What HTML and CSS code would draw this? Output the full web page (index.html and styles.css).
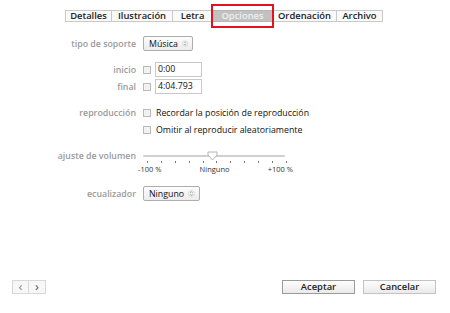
FILE: index.html
```html
<!DOCTYPE html>
<html>
<head>
    <title>Opciones</title>
    <link rel="stylesheet" href="styles.css">
</head>
<body>
    <div class="tabs">
        <span class="tab">Detalles</span>
        <span class="tab">Ilustración</span>
        <span class="tab">Letra</span>
        <span class="tab active">Opciones</span>
        <span class="tab">Ordenación</span>
        <span class="tab">Archivo</span>
    </div>

    <div class="form">
        <div class="row row-media">
            <span class="label">tipo de soporte</span>
            <span class="select">Música
                <svg class="updown" width="9" height="9" viewBox="0 0 9 9"><circle cx="4.5" cy="4.5" r="4" fill="none" stroke="#d0d0d0"/><path d="M2.8 3.6 L4.5 2.2 L6.2 3.6 M2.8 5.4 L4.5 6.8 L6.2 5.4" fill="none" stroke="#888" stroke-width="0.9"/></svg>
            </span>
        </div>

        <div class="row row-start">
            <span class="label">inicio</span>
            <span class="check"></span>
            <span class="field">0:00</span>
        </div>
        <div class="row row-end">
            <span class="label">final</span>
            <span class="check"></span>
            <span class="field">4:04.793</span>
        </div>

        <div class="row row-play">
            <span class="label">reproducción</span>
            <span class="check"></span>
            <span class="text">Recordar la posición de reproducción</span>
        </div>
        <div class="row row-skip">
            <span class="label"></span>
            <span class="check"></span>
            <span class="text">Omitir al reproducir aleatoriamente</span>
        </div>

        <div class="row row-volume">
            <span class="label">ajuste de volumen</span>
            <div class="slider">
                <div class="track">
                    <svg class="thumb" width="11" height="10" viewBox="0 0 11 10"><path d="M1 1 H10 V4 L5.5 9 L1 4 Z" fill="#fff" stroke="#b4b4b4"/></svg>
                </div>
                <div class="ticks">
                    <i></i><i></i><i></i><i></i><i></i><i></i><i></i><i></i><i></i><i></i><i></i>
                </div>
                <div class="scale">
                    <span>-100 %</span>
                    <span>Ninguno</span>
                    <span>+100 %</span>
                </div>
            </div>
        </div>

        <div class="row row-eq">
            <span class="label">ecualizador</span>
            <span class="select">Ninguno
                <svg class="updown" width="9" height="9" viewBox="0 0 9 9"><circle cx="4.5" cy="4.5" r="4" fill="none" stroke="#d0d0d0"/><path d="M2.8 3.6 L4.5 2.2 L6.2 3.6 M2.8 5.4 L4.5 6.8 L6.2 5.4" fill="none" stroke="#888" stroke-width="0.9"/></svg>
            </span>
        </div>
    </div>

    <div class="footer">
        <div class="nav">
            <span class="navbtn">&lsaquo;</span>
            <span class="navbtn">&rsaquo;</span>
        </div>
        <div class="actions">
            <span class="button default">Aceptar</span>
            <span class="button">Cancelar</span>
        </div>
    </div>
</body>
</html>
```

FILE: styles.css
```css
body {
    margin: 0;
    width: 450px;
    height: 313px;
    background: #fff;
    font-family: "Open Sans", "Noto Sans", sans-serif;
    font-size: 8.8px;
    color: #111;
    display: flex;
    flex-direction: column;
}
.tabs {
    display: flex;
    margin: 10px 0 0 65px;
    height: 12px;
}
.tab {
    box-sizing: border-box;
    height: 12px;
    line-height: 10px;
    border: 1px solid #c9c9c9;
    border-left: none;
    background: #fafafa;
    font-weight: 600;
    font-size: 9.4px;
    color: #222;
    text-align: center;
}
.tab:first-child {
    border-left: 1px solid #c9c9c9;
    width: 47px;
}
.tab:nth-child(2) { width: 61px; }
.tab:nth-child(3) { width: 40px; }
.tab:nth-child(5) { width: 64px; }
.tab:nth-child(6) { width: 46px; }
.tab.active {
    position: relative;
    width: 60px;
    background: #c2c2c2;
    color: #eee;
    border-color: #b5b5b5;
}
.tab.active::after {
    content: "";
    position: absolute;
    left: -2px;
    right: -2px;
    top: -7px;
    bottom: -7px;
    border: 2px solid #e0141e;
}
.form {
    margin-top: 14px;
}
.row {
    display: flex;
    align-items: center;
}
.label {
    width: 136px;
    flex: none;
    text-align: right;
    color: #9a9a9a;
    font-weight: 600;
    margin-right: 7px;
}
.select {
    box-sizing: border-box;
    display: inline-flex;
    align-items: center;
    justify-content: space-between;
    gap: 4px;
    height: 15px;
    padding: 0 4px 0 5px;
    border: 1px solid #adadad;
    border-radius: 2px;
    background: linear-gradient(#fdfdfd, #ececec);
    color: #111;
}
.row-media .select { width: 50px; }
.row-eq .select { width: 57px; }
.check {
    box-sizing: border-box;
    width: 8px;
    height: 8px;
    border: 1px solid #b9b9b9;
    background: #f2f2f2;
    flex: none;
    margin-right: 4px;
}
.field {
    box-sizing: border-box;
    width: 47px;
    height: 15px;
    line-height: 13px;
    padding-left: 2px;
    border: 1px solid #c9c9c9;
    color: #111;
}
.row-start { margin-top: 11px; }
.row-end { margin-top: 2px; }
.row-play { margin-top: 13px; }
.row-skip { margin-top: 5px; }
.text { margin-left: 1px; }
.row-volume {
    margin-top: 13px;
    align-items: flex-start;
}
.row-volume .label { line-height: 14px; }
.slider {
    width: 155px;
    margin-left: -5px;
}
.track {
    position: relative;
    margin: 6px 8px 0 5px;
    height: 2px;
    background: #cfcfcf;
    border-radius: 1px;
}
.thumb {
    position: absolute;
    left: 64px;
    top: -4px;
}
.ticks {
    display: flex;
    justify-content: space-between;
    margin: 4px 6px 0 9px;
    height: 2px;
}
.ticks i {
    width: 1px;
    height: 2px;
    background: #777;
}
.scale {
    display: flex;
    justify-content: space-between;
    font-size: 7.5px;
    color: #333;
    line-height: 10px;
    margin-top: 1px;
}
.row-eq { margin-top: 12px; }
.footer {
    margin-top: auto;
    margin-bottom: 19px;
    display: flex;
    justify-content: space-between;
    align-items: center;
    padding: 0 14px 0 12px;
}
.nav { display: flex; }
.navbtn {
    box-sizing: border-box;
    width: 17px;
    height: 14px;
    line-height: 11px;
    text-align: center;
    border: 1px solid #d8d8d8;
    background: #f7f7f7;
    color: #888;
    font-size: 13px;
}
.navbtn + .navbtn { border-left: none; color: #555; }
.actions { display: flex; gap: 8px; }
.button {
    box-sizing: border-box;
    width: 73px;
    height: 14px;
    line-height: 12px;
    text-align: center;
    border: 1px solid #c3c3c3;
    background: linear-gradient(#fdfdfd, #eaeaea);
    font-weight: 600;
    font-size: 9.4px;
    color: #222;
}
.button.default {
    border-color: #9a9a9a;
}
```
